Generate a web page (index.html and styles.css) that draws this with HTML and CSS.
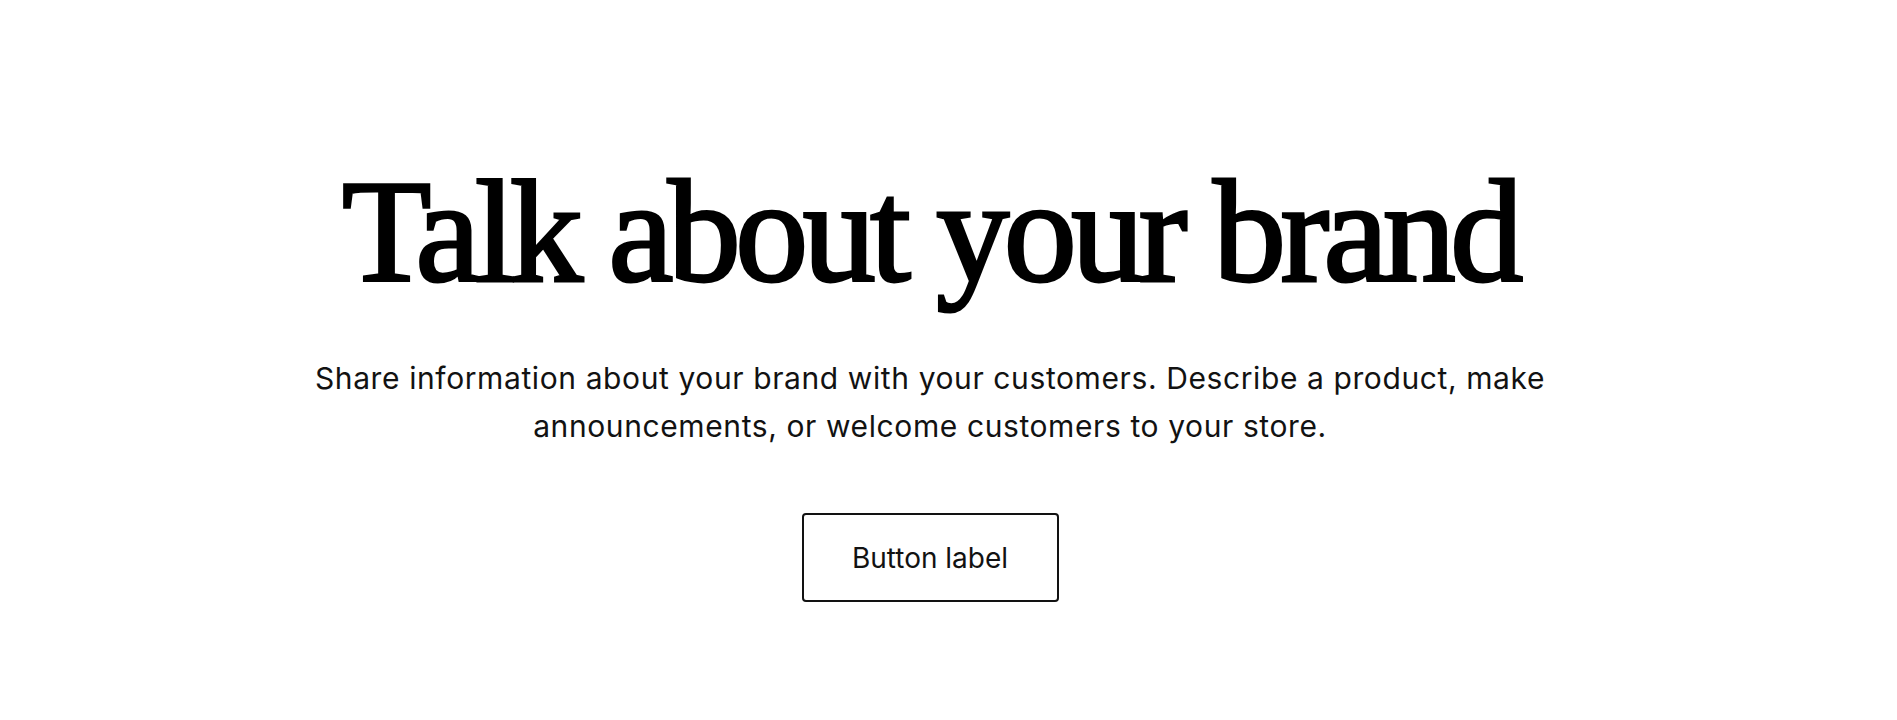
FILE: index.html
```html
<!DOCTYPE html>
<html lang="en">
<head>
<meta charset="utf-8">
<title>Talk about your brand</title>
<link rel="stylesheet" href="styles.css">
</head>
<body>
<section class="banner">
  <h2 class="banner-title">Talk about your brand</h2>
  <p class="banner-text">Share information about your brand with your customers. Describe a product, make<br>announcements, or welcome customers to your store.</p>
  <a class="banner-button" href="#">Button label</a>
</section>
</body>
</html>
```
FILE: styles.css
```css
* { box-sizing: border-box; }
html, body { margin: 0; padding: 0; background: #ffffff; }
body { color: #121212; font-family: "Inter", "Liberation Sans", sans-serif; }
.banner {
  display: flex;
  flex-direction: column;
  align-items: center;
  padding: 159px 37px 0 0;
  width: 1897px;
}
.banner-title {
  margin: 0;
  font-family: "Liberation Serif", serif;
  font-weight: 400;
  font-size: 146px;
  line-height: 1;
  letter-spacing: -5.5px;
  -webkit-text-stroke: 3px #000;
  color: #000;
}
.banner-text {
  margin: 49px 0 0;
  font-size: 30px;
  line-height: 48px;
  letter-spacing: 0.6px;
  text-align: center;
  color: #121212;
}
.banner-button {
  margin-top: 63px;
  display: flex;
  align-items: center;
  justify-content: center;
  width: 257px;
  height: 89px;
  border: 2px solid #121212;
  border-radius: 4px;
  color: #121212;
  text-decoration: none;
  font-size: 28px;
}
```
